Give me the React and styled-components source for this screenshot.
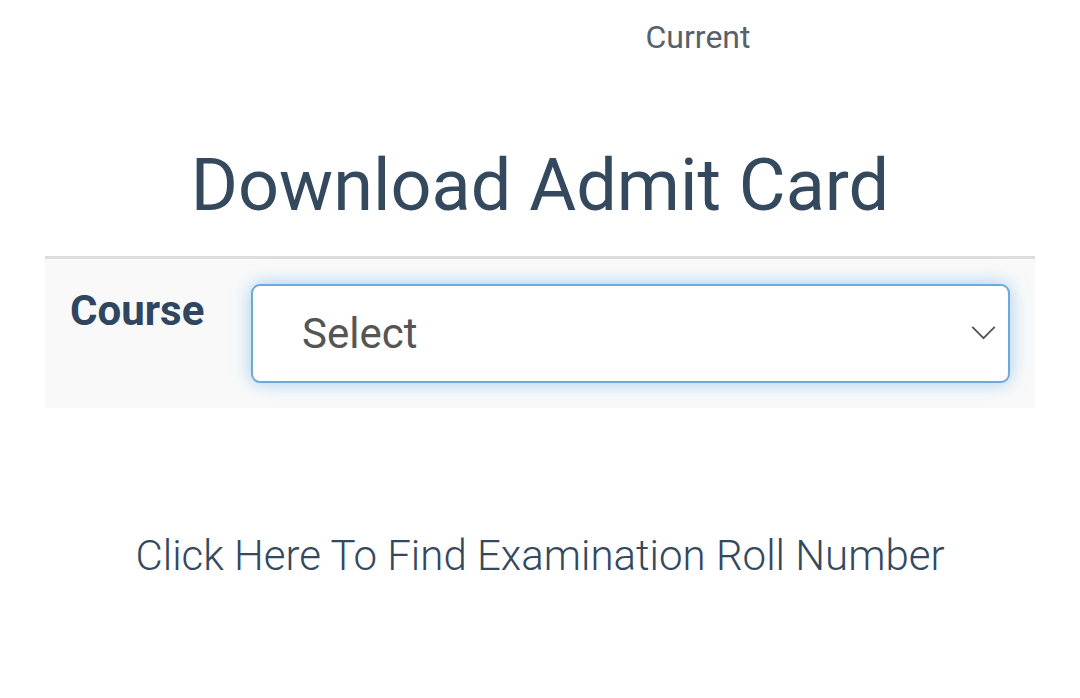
import React from "react";
import styled, { createGlobalStyle } from "styled-components";

const GlobalStyle = createGlobalStyle`
  html, body {
    margin: 0;
    padding: 0;
    background: #fff;
    font-family: Roboto, "Liberation Sans", sans-serif;
  }
`;

const App = () => {
  return (
    <Page>
      <GlobalStyle />
      <Tab>Current</Tab>
      <Heading>Download Admit Card</Heading>
      <FormPanel>
        <Label>Course</Label>
        <SelectBox>
          <span>Select</span>
          <Chevron viewBox="0 0 26 16">
            <path d="M1 1 L13 13 L25 1" fill="none" stroke="#555" strokeWidth="2" />
          </Chevron>
        </SelectBox>
      </FormPanel>
      <RollLink>Click Here To Find Examination Roll Number</RollLink>
    </Page>
  );
};

const Page = styled.div`
  width: 1080px;
  height: 698px;
  display: flex;
  flex-direction: column;
  align-items: center;
  color: #34495e;
`;

const Tab = styled.div`
  margin-top: 18px;
  margin-left: 316px;
  font-size: 32px;
  font-weight: 400;
  color: #56616c;
  line-height: 38px;
`;

const Heading = styled.h1`
  margin: 88px 0 0;
  font-size: 72px;
  font-weight: 400;
  line-height: 84px;
  color: #34495e;
`;

const FormPanel = styled.div`
  box-sizing: border-box;
  width: 990px;
  margin-top: 28px;
  border-top: 3px solid #dddddd;
  background: #f9f9f9;
  display: flex;
  align-items: flex-start;
  padding: 25px 25px 25px 25px;
  gap: 48px;
`;

const Label = styled.div`
  font-size: 42px;
  font-weight: 700;
  color: #2f4560;
  line-height: 54px;
  width: 133px;
`;

const SelectBox = styled.div`
  box-sizing: border-box;
  flex: 1;
  height: 99px;
  background: #fff;
  border: 2px solid #6fa8d9;
  border-radius: 9px;
  box-shadow: 0 0 18px rgba(102, 175, 233, 0.6);
  display: flex;
  align-items: center;
  justify-content: space-between;
  padding: 0 12px 0 49px;
  font-size: 42px;
  color: #555;
`;

const Chevron = styled.svg`
  width: 25px;
  height: 15px;
`;

const RollLink = styled.div`
  margin-top: 123px;
  font-size: 42px;
  font-weight: 300;
  color: #34495e;
  line-height: 50px;
`;

export default App;
